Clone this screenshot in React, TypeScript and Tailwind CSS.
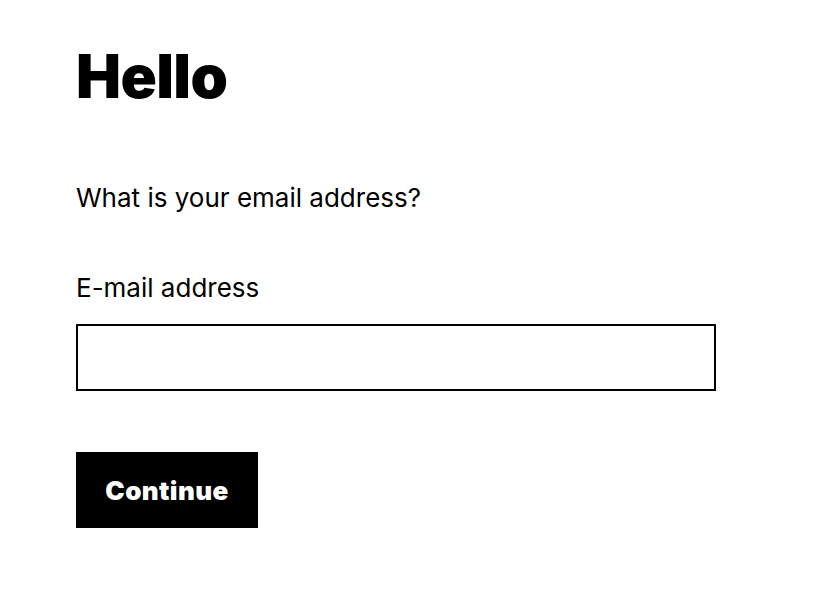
import React from 'react';

export default function App() {
  return (
    <div className="min-h-screen bg-white text-black px-[76px] pt-[38px]" style={{ fontFamily: 'Inter, "Liberation Sans", sans-serif' }}>
      <h1 className="text-[60px] leading-[76px] font-black tracking-[-0.6px]">Hello</h1>

      <p className="mt-[68px] text-[26px] leading-[32px]">What is your email address?</p>

      <form className="mt-[58px] w-[640px]" onSubmit={(e) => e.preventDefault()}>
        <label htmlFor="email" className="block text-[26px] leading-[32px]">E-mail address</label>
        <input
          id="email"
          type="email"
          className="mt-[20px] block w-full h-[67px] border-2 border-black outline-none px-4 text-[22px]"
        />
        <button
          type="submit"
          className="mt-[61px] h-[76px] w-[182px] bg-black text-white text-[26px] font-black tracking-[0.4px]"
        >
          Continue
        </button>
      </form>
    </div>
  );
}
